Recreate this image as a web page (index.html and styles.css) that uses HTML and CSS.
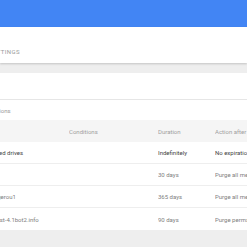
FILE: index.html
```html
<!DOCTYPE html>
<html lang="en">
<head>
    <meta charset="UTF-8">
    <title>Retention</title>
    <link rel="stylesheet" href="styles.css">
</head>
<body>
    <div class="appbar"></div>
    <div class="subnav">
        <div class="tab">SETTINGS</div>
    </div>
    <div class="content">
        <div class="card">
            <div class="card-top"></div>
            <div class="card-title">Retentions</div>
            <div class="table">
                <div class="row head">
                    <div class="cell scope"></div>
                    <div class="cell cond">Conditions</div>
                    <div class="cell dur">Duration</div>
                    <div class="cell act">Action after expiration</div>
                </div>
                <div class="row strong">
                    <div class="cell scope">All shared drives</div>
                    <div class="cell cond"></div>
                    <div class="cell dur">Indefinitely</div>
                    <div class="cell act">No expiration</div>
                </div>
                <div class="row">
                    <div class="cell scope">Mail</div>
                    <div class="cell cond"></div>
                    <div class="cell dur">30 days</div>
                    <div class="cell act">Purge all messages</div>
                </div>
                <div class="row">
                    <div class="cell scope">Users: gerou1</div>
                    <div class="cell cond"></div>
                    <div class="cell dur">365 days</div>
                    <div class="cell act">Purge all messages</div>
                </div>
                <div class="row">
                    <div class="cell scope">Dom: test-4.1bot2.info</div>
                    <div class="cell cond"></div>
                    <div class="cell dur">90 days</div>
                    <div class="cell act">Purge permanently</div>
                </div>
            </div>
        </div>
    </div>
</body>
</html>
```

FILE: styles.css
```css
html, body {
    margin: 0;
    overflow: hidden;
}
body {
    width: 247px;
    height: 247px;
    background-color: #eeeeee;
    font-family: Roboto, 'Liberation Sans', sans-serif;
}
.appbar {
    height: 27px;
    background-color: #4285f4;
}
.subnav {
    height: 36px;
    background-color: #ffffff;
    box-shadow: 0 1px 2px rgba(0, 0, 0, 0.18);
    position: relative;
    display: flex;
    align-items: flex-end;
}
.tab {
    margin-left: -11px;
    padding-bottom: 8px;
    font-size: 6px;
    letter-spacing: 0.4px;
    color: #9a9a9a;
    white-space: nowrap;
}
.content {
    padding-top: 10px;
}
.card {
    background-color: #ffffff;
    margin-left: -21px;
    width: 340px;
}
.card-top {
    height: 26px;
    border-bottom: 1px solid #e6e6e6;
}
.card-title {
    height: 20px;
    line-height: 21px;
    padding-left: 3px;
    font-size: 6px;
    color: #9a9a9a;
    white-space: nowrap;
}
.row {
    display: flex;
    height: 22px;
    box-sizing: border-box;
    align-items: center;
    border-bottom: 1px solid #eeeeee;
    font-size: 6px;
    color: #808080;
    white-space: nowrap;
}
.row:last-child {
    border-bottom: none;
}
.row.head {
    background-color: #f5f5f5;
    color: #a0a0a0;
    border-bottom: none;
}
.row.strong {
    color: #444444;
}
.cell {
    overflow: hidden;
}
.scope {
    width: 90px;
}
.cond {
    width: 89px;
}
.dur {
    width: 57px;
}
.act {
    flex: 1;
}
```
